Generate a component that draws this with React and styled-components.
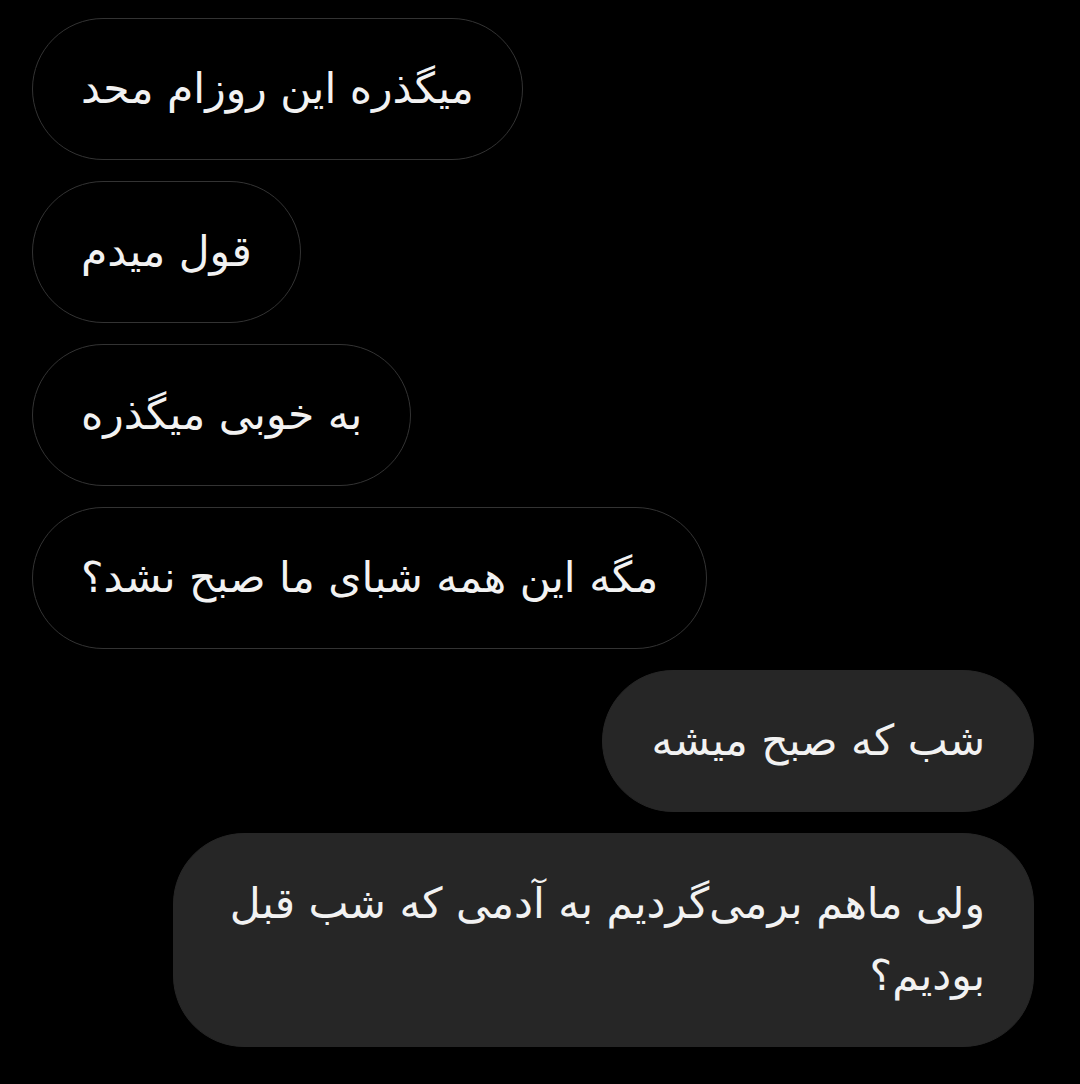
import React from "react";
import styled, { createGlobalStyle } from "styled-components";

const GlobalStyle = createGlobalStyle`
  html, body {
    margin: 0;
    padding: 0;
    background: #000;
  }
`;

const Thread = styled.div`
  display: flex;
  flex-direction: column;
  gap: 21px;
  padding: 18px 46px 20px 32px;
  min-height: 1084px;
  box-sizing: border-box;
  background: #000;
`;

const Row = styled.div`
  display: flex;
  justify-content: ${(p) => (p.$mine ? "flex-end" : "flex-start")};
`;

const Bubble = styled.div`
  direction: rtl;
  box-sizing: border-box;
  padding: 34px 48px;
  border-radius: 71px;
  font-family: "DejaVu Sans", "Noto Sans", sans-serif;
  font-size: 42.5px;
  line-height: 72px;
  color: #f2f2f2;
  text-align: right;
  background: ${(p) => (p.$mine ? "#262626" : "#000")};
  border: 1px solid ${(p) => (p.$mine ? "#262626" : "#333")};
  max-width: 861px;
`;

const messages = [
  { text: "میگذره این روزام محد" },
  { text: "قول میدم" },
  { text: "به خوبی میگذره" },
  { text: "مگه این همه شبای ما صبح نشد؟" },
  { text: "شب که صبح میشه", mine: true },
  { text: "ولی ماهم برمی‌گردیم به آدمی که شب قبل بودیم؟", mine: true },
];

export default function App() {
  return (
    <>
      <GlobalStyle />
      <Thread>
        {messages.map((m, i) => (
          <Row key={i} $mine={m.mine}>
            <Bubble $mine={m.mine}>{m.text}</Bubble>
          </Row>
        ))}
      </Thread>
    </>
  );
}
